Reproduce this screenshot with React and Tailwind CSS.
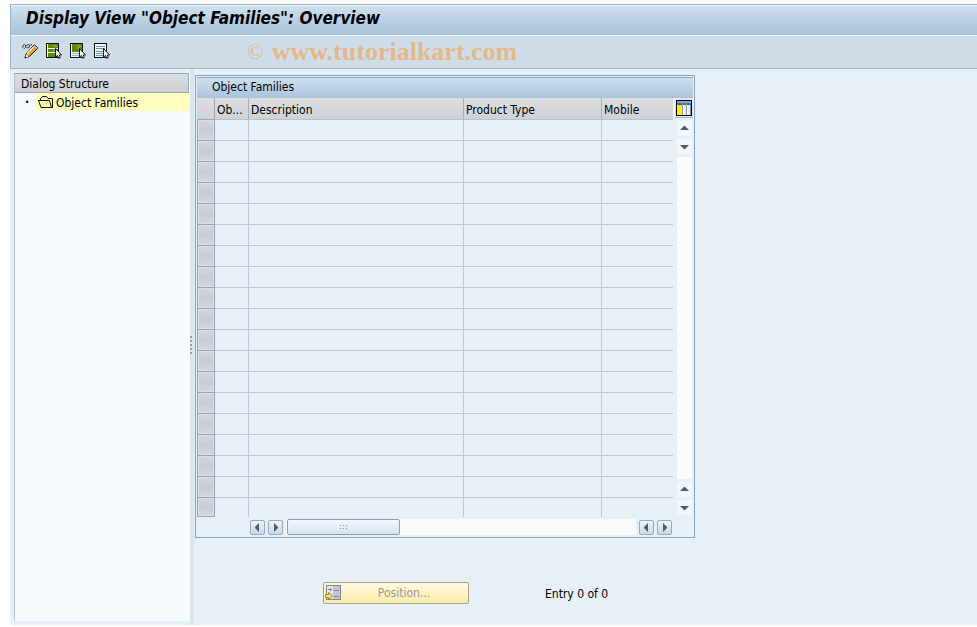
import React, { useState } from 'react';

const columns = [
  { key: 'ob', label: 'Ob...' },
  { key: 'description', label: 'Description' },
  { key: 'productType', label: 'Product Type' },
  { key: 'mobile', label: 'Mobile' },
];

const rows = Array.from({ length: 19 }, (_, i) => i);

const Cursor = () => (
  <path
    d="M9.5 5.5v8.5l2-1.5 1.2 2.8 1.6-.6-1-2.7h2.2z"
    fill="#fff"
    stroke="#111"
    strokeLinejoin="round"
    shapeRendering="auto"
  />
);

const PencilIcon = () => (
  <svg width="16" height="16" viewBox="0 0 16 16" fill="none">
    <path
      d="M.5 4.5l.5-2 1.5-1 1 1v2l-1 1-1-.5M3.5 3.5L5 2l1.5-.5 1 1-.5 2-1.5.5L4.5 4M7.5 2.5L9 1.5l1 .5"
      stroke="#222"
      strokeWidth=".9"
    />
    <path d="M4 11l7-8 1.5-1 3 2.5-.7 1.8-7.5 7.2-4.3 1.5z" fill="#f39a1c" stroke="#111" strokeLinejoin="round" />
    <path d="M5 11l6.5-7" stroke="#fff0cc" strokeWidth="1.5" />
    <path d="M11.3 3.3l1.4-.9 2.4 2-.8 1.6z" fill="#b9bfe0" />
    <path d="M3.8 11.6l2.8 2.2-3 .9z" fill="#fff" />
    <path d="M3 15l.4-1.8 1.4 1.3z" fill="#111" />
  </svg>
);

const SelectAllIcon = () => (
  <svg width="16" height="16" viewBox="0 0 16 16" shapeRendering="crispEdges">
    <rect x=".5" y=".5" width="12" height="14" fill="#f4f7f4" stroke="#111" />
    <path d="M2 1h10v4H2zM2 6h10v3H2zM2 10h10v4H2z" fill="#5c8a00" />
    <path d="M7 2h1v1H7zM9 2h1v1H9zM8 3h1v1H8zM10 3h1v1h-1zM7 7h1v1H7z" fill="#9cbf45" />
    <Cursor />
  </svg>
);

const SelectBlockIcon = () => (
  <svg width="16" height="16" viewBox="0 0 16 16" shapeRendering="crispEdges">
    <rect x=".5" y=".5" width="12" height="14" fill="#f4f7fa" stroke="#111" />
    <path d="M2 1h10v8H2z" fill="#5c8a00" />
    <path d="M7 2h1v1H7zM9 2h1v1H9zM8 3h1v1H8zM10 3h1v1h-1zM7 4h1v1H7zM9 4h1v1H9zM8 5h1v1H8z" fill="#9cbf45" />
    <path d="M2 10h9v1H2zM2 12h9v1H2z" fill="#9aaec2" />
    <Cursor />
  </svg>
);

const DeselectIcon = () => (
  <svg width="16" height="16" viewBox="0 0 16 16" shapeRendering="crispEdges">
    <rect x=".5" y=".5" width="12" height="14" fill="#eef4f9" stroke="#111" />
    <path d="M2 3h9v1H2zM2 5h9v1H2zM2 8h9v1H2zM2 10h9v1H2zM2 12h9v1H2z" fill="#7990a8" />
    <Cursor />
  </svg>
);

const FolderIcon = () => (
  <svg width="16" height="13" viewBox="0 0 16 13" fill="#fff5a8" stroke="#111">
    <path d="M2.5 5V2.5l2-2h4l1.5 2h4.5v9h-11" />
    <path d="M.5 4.5h11l2 7H3z" />
  </svg>
);

const ConfigIcon = () => (
  <svg width="16" height="16" viewBox="0 0 16 16" shapeRendering="crispEdges">
    <rect width="16" height="16" fill="#000" />
    <rect x="1" y="1" width="14" height="14" fill="#e6ebf2" />
    <path d="M1 1h14v4H1z" fill="#2f6da8" />
    <path d="M1 1h14v2H1z" fill="#78abd6" />
    <path d="M1 5h5v10H1z" fill="#ffeb00" />
    <path d="M6 2h1v13H6zM10 2h1v13h-1zM14 5h1v10h-1z" fill="#8e99ab" />
    <path d="M7 5h1v10H7zM11 5h1v10h-1z" fill="#fff" />
  </svg>
);

const PositionIcon = () => (
  <svg width="16" height="16" viewBox="0 0 16 16" shapeRendering="crispEdges">
    <rect x="1.5" y=".5" width="14" height="14" fill="#e3e5ee" stroke="#85858d" />
    <path d="M8 1h7v13H8z" fill="#c3c5dc" />
    <path d="M3 4h3v1H3zM5 3h1v3H5zM6 4h1v1H6zM9 5h5v1H9zM9 11h5v1H9z" fill="#85858d" />
    <path d="M.5 9.5h3v-2l4 3.5-4 3.5v-2h-3z" fill="#ffec4a" stroke="#8f8643" shapeRendering="auto" />
  </svg>
);

const arrows = {
  up: 'M0 6h9L5 2H4z',
  down: 'M0 3h9L5 7H4z',
  left: 'M6 0v9L2 5V4z',
  right: 'M3 0v9l4-4V4z',
};

const ScrollButton = ({ direction, framed }) => (
  <button
    type="button"
    aria-label={`Scroll ${direction}`}
    className={`flex h-[15px] w-[15px] shrink-0 items-center justify-center ${
      framed
        ? 'rounded-xs border border-[#9aa9bb] bg-linear-to-b from-[#edf4f9] to-[#c9dae5]'
        : 'bg-[#f3f7fb]'
    }`}
  >
    <svg width="9" height="9" viewBox="0 0 9 9" fill="#4c5d6d">
      <path d={arrows[direction]} />
    </svg>
  </button>
);

const toolbar = [
  { label: 'Display/Change', icon: PencilIcon },
  { label: 'Select All', icon: SelectAllIcon },
  { label: 'Select Block', icon: SelectBlockIcon },
  { label: 'Deselect All', icon: DeselectIcon },
];

const Header = () => (
  <header className="border-t border-l border-[#9db1ca]">
    <div className="flex h-[31px] items-center border-y border-[#f0f6fb] bg-linear-to-b from-[#cfe0ec] to-[#a9c1dc] px-[15px]">
      <h1 className="pb-1.5 text-[17px] leading-5 font-bold italic">
        Display View "Object Families": Overview
      </h1>
    </div>
    <div className="flex h-[33px] items-center border-b border-[#a3b4cc] bg-[#cfdde8] pl-[11px]">
      <div className="flex gap-2 pb-0.5">
        {toolbar.map((item) => (
          <button key={item.label} type="button" aria-label={item.label}>
            <item.icon />
          </button>
        ))}
      </div>
      <p className="flex gap-2 pl-[137px] font-['Liberation_Serif',serif] text-[26px] leading-8 text-[#e5b88a]">
        <span className="text-[22px]">©</span>
        <span className="font-bold">www.tutorialkart.com</span>
      </p>
    </div>
  </header>
);

const DialogStructure = () => (
  <aside className="mt-1 mb-1 ml-1 w-44 shrink-0 border-l border-[#b5c1cf] bg-[#f7fbff] pr-px">
    <h2 className="h-5 border border-l-0 border-[#9ba7b8] bg-linear-to-b from-[#dcdfe2] to-[#cbd0d4] pl-1.5 leading-5">
      Dialog Structure
    </h2>
    <ul>
      <li className="flex h-[18px] items-center">
        <span className="w-[21px] pl-[10px] font-bold">·</span>
        <a href="#families" className="flex h-full flex-1 items-center gap-0.5 bg-[#fffdbe] pl-0.5">
          <FolderIcon />
          <span className="pt-0.5">Object Families</span>
        </a>
      </li>
    </ul>
  </aside>
);

const Splitter = () => (
  <div className="flex w-1 shrink-0 flex-col items-start justify-center gap-0.5 bg-[#dae6ed] pb-1">
    {[0, 1, 2, 3, 4].map((dot) => (
      <span key={dot} className="h-0.5 w-0.5 bg-[#8f9fb4]" />
    ))}
  </div>
);

const FamiliesTable = () => (
  <section className="w-[500px] border border-[#86a3c3] p-px">
    <h2 className="h-[21px] border-t border-[#8fa9c7] bg-linear-to-b from-[#cfe0ec] to-[#a9c2dc] pl-[15px] leading-[18px]">
      Object Families
    </h2>
    <div className="flex">
      <table className="w-[476px] table-fixed border-separate border-spacing-0">
        <colgroup>
          <col className="w-[18px]" />
          <col className="w-[34px]" />
          <col className="w-[215px]" />
          <col className="w-[138px]" />
          <col />
        </colgroup>
        <thead>
          <tr className="h-[22px] bg-linear-to-b from-[#dddfe2] to-[#cdd2d6]">
            <th className="border-r border-b border-[#9ca8b8] p-0" aria-label="Selection" />
            {columns.map((column) => (
              <th
                key={column.key}
                className="border-r border-b border-r-[#a5afbd] border-b-[#b7c1d0] pt-0.5 pr-0 pb-0 pl-0.5 text-left font-normal whitespace-nowrap last:border-r-0"
              >
                {column.label}
              </th>
            ))}
          </tr>
        </thead>
        <tbody>
          {rows.map((row) => (
            <tr key={row} className="h-[21px] last:h-[19px]">
              <td className="border-x border-b border-[#98a4b5] p-0">
                <button
                  type="button"
                  aria-label={`Select row ${row + 1}`}
                  className={`block w-full border border-[#dcdfe5] bg-linear-to-b from-[#d3d6dc] via-[#c8ccd4] to-[#d3d6dc] ${
                    row < rows.length - 1 ? 'h-5' : 'h-[18px]'
                  }`}
                />
              </td>
              {columns.map((column) => (
                <td
                  key={column.key}
                  className={`border-r border-[#bdc7d5] p-0 last:border-r-0 ${row < rows.length - 1 ? 'border-b' : ''}`}
                />
              ))}
            </tr>
          ))}
        </tbody>
      </table>
      <div className="flex flex-1 flex-col items-center gap-[3px] pb-0.5 pl-0.5">
        <button
          type="button"
          aria-label="Table settings"
          className="flex h-5 w-full items-center justify-center border-b border-[#a5b3c4] bg-[#e1e6ec]"
        >
          <ConfigIcon />
        </button>
        <ScrollButton direction="up" />
        <ScrollButton direction="down" />
        <div className="w-[15px] flex-1 bg-[#fbfbfb]" />
        <ScrollButton direction="up" />
        <ScrollButton direction="down" />
      </div>
    </div>
    <div className="flex items-center gap-[3px] pt-0.5 pr-[21px] pb-px pl-[53px]">
      <ScrollButton direction="left" framed />
      <ScrollButton direction="right" framed />
      <div className="h-4 flex-1 bg-[#fbfbfb] pl-px">
        <div className="flex h-4 w-[113px] items-center justify-center rounded-xs border border-[#8c9db3] bg-linear-to-b from-[#f2f7fc] to-[#d9e3f0]">
          <span className="grid grid-cols-3 gap-0.5">
            {[0, 1, 2, 3, 4, 5].map((dot) => (
              <span key={dot} className="h-px w-px bg-[#8795a9]" />
            ))}
          </span>
        </div>
      </div>
      <ScrollButton direction="left" framed />
      <ScrollButton direction="right" framed />
    </div>
  </section>
);

const App = () => {
  const [entry] = useState({ current: 0, total: 0 });

  return (
    <div className="bg-white pt-1 pl-[10px] font-['DejaVu_Sans_Condensed','DejaVu_Sans',sans-serif] text-[12px] leading-4 text-black">
      <Header />
      <main className="flex bg-[#e8f0f7]">
        <DialogStructure />
        <Splitter />
        <div className="min-w-0 flex-1 pt-1.5 pb-[21px] pl-px">
          <FamiliesTable />
          <div className="mt-11 flex items-center pl-32">
            <button
              type="button"
              className="flex h-[22px] w-[146px] items-center rounded-xs border border-[#a3a08f] bg-linear-to-b from-[#fffbe0] to-[#fdeba8] pl-px text-[#999]"
            >
              <PositionIcon />
              <span className="flex-1 pr-px text-center">Position...</span>
            </button>
            <p className="pt-0.5 pl-[76px]">
              Entry {entry.current} of {entry.total}
            </p>
          </div>
        </div>
      </main>
    </div>
  );
};

export default App;
